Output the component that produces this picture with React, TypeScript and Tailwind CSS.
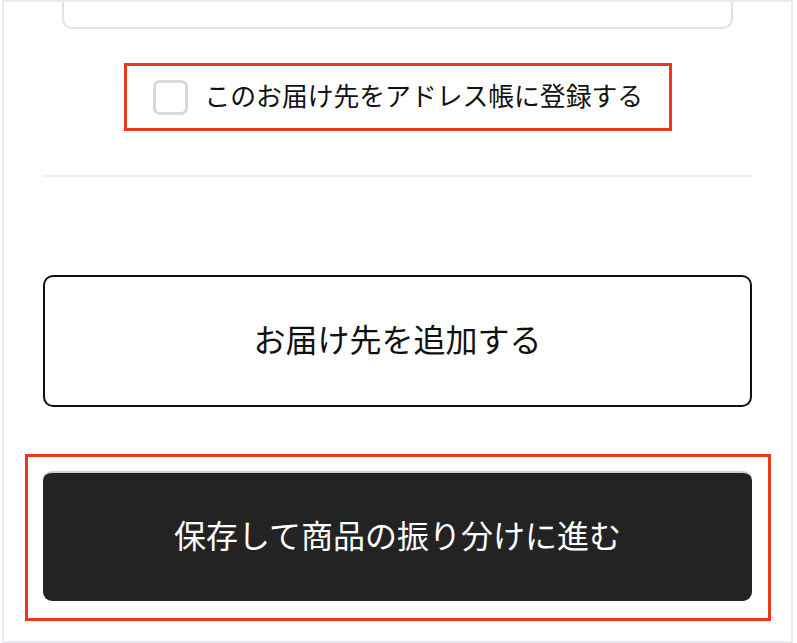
export default function App() {
  return (
    <div
      className="w-[797px] h-[643px] bg-white pl-[2px] pr-[4px] overflow-hidden"
      style={{ fontFamily: '"Noto Sans CJK JP", "Noto Sans", sans-serif' }}
    >
      <div className="h-[643px] border-2 border-[#ebebef] overflow-hidden flex flex-col">
        {/* previous card, cut off at the top */}
        <div className="mx-[58px] -mt-[33px] h-[60px] shrink-0 rounded-[10px] border-2 border-[#e2e2e2]" />

        {/* save to address book */}
        <div className="mt-[34px] self-center w-[548px] h-[68px] border-[3px] border-[#e8391d] flex items-center pl-[26px]">
          <span className="w-[35px] h-[35px] rounded-[7px] border-[3px] border-[#d9d9d9] bg-white shrink-0" />
          <span className="ml-[17px] mb-[4px] text-[25.8px] leading-none text-[#111] whitespace-nowrap">
            このお届け先をアドレス帳に登録する
          </span>
        </div>

        <div className="mt-[44px] mx-[39px] h-[2px] bg-[#eeeeee] shrink-0" />

        <button className="mt-[98px] mx-[39px] h-[132px] shrink-0 rounded-[10px] border-2 border-[#111] bg-white flex items-center justify-center pb-[6px] text-[32px] text-[#111]">
          お届け先を追加する
        </button>

        <div className="mt-[47px] ml-[21px] mr-[20px] h-[167px] shrink-0 border-[3px] border-[#e8391d] pt-[14px] pl-[15px] pr-[16px]">
          <button className="w-full h-[130px] rounded-[9px] bg-[#232323] border-t-2 border-[#cfcfcf] flex items-center justify-center pb-[6px] text-[32px] text-white">
            保存して商品の振り分けに進む
          </button>
        </div>
      </div>
    </div>
  );
}
